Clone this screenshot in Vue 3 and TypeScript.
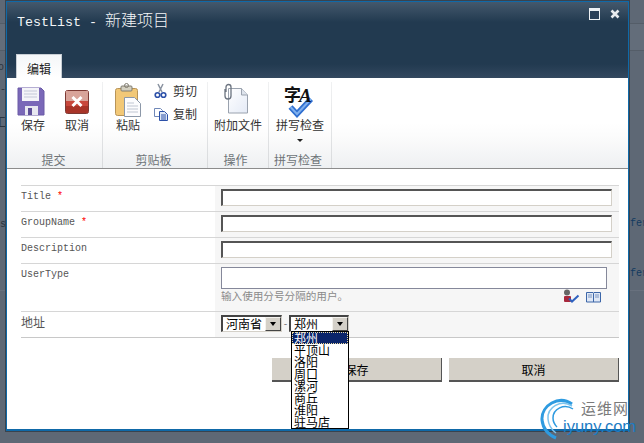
<script setup lang="ts">
const fields = [
  { label: 'Title', required: true },
  { label: 'GroupName', required: true },
  { label: 'Description', required: false },
]
const cities = ['郑州', '平顶山', '洛阳', '周口', '漯河', '商丘', '淮阳', '驻马店']
</script>

<template>
  <div class="page">
    <div class="bgband"></div>
    <span class="scrap s1">ot</span>
    <span class="scrap s2">-</span>
    <span class="scrap s3">工</span>
    <span class="scrap s4">s</span>
    <span class="scrap fer f1">fer</span>
    <span class="scrap fer f2">fer</span>
    <div class="bgline"></div>

    <div class="dialog">
      <header class="head">
        <div class="titlebar">
          <div class="title"><span class="latin">TestList - </span>新建项目</div>
          <div class="winbtns">
            <svg width="11" height="12" viewBox="0 0 11 12"><rect x="0.5" y="0.5" width="10" height="11" fill="#2a4058" stroke="#eef1f4"/><rect x="1" y="1" width="9" height="2" fill="#eef1f4"/></svg>
            <svg width="10" height="10" viewBox="0 0 10 10"><path d="M1.500 1.500l7 7M8.500 1.500l-7 7" stroke="#e8ebee" stroke-width="2.600" fill="none"/></svg>
          </div>
        </div>
        <div class="tab">编辑</div>
      </header>

      <section class="ribbon">
        <div class="group g1">
          <div class="items">
            <div class="big">
              <svg class="ico" width="34" height="36" viewBox="0 0 34 36">
                <path d="M2 6h23l3 3v24H2z" fill="#7a68b8" stroke="#6a5aa6"/>
                <rect x="6" y="6" width="17" height="13" fill="#f4f4f8"/>
                <path d="M8 9h13M8 12h13M8 15h13" stroke="#c4c8d8"/>
                <rect x="9" y="24" width="13" height="9" fill="#e8e8f0"/>
                <rect x="12" y="26" width="4" height="7" fill="#5e4f98"/>
              </svg>
              <span>保存</span>
            </div>
            <div class="big">
              <svg class="ico" width="34" height="36" viewBox="0 0 34 36">
                <rect x="5.500" y="8.500" width="23" height="23" rx="2" fill="#c8483c" stroke="#7c3a34"/>
                <rect x="6" y="9" width="22" height="10" fill="#d8a49a"/>
                <rect x="6" y="24" width="22" height="7" fill="#a83428"/>
                <path d="M12.500 15l9 9M21.500 15l-9 9" stroke="#fff" stroke-width="3" fill="none"/>
              </svg>
              <span>取消</span>
            </div>
          </div>
          <div class="glabel">提交</div>
        </div>

        <div class="group g2">
          <div class="items">
            <div class="big">
              <svg class="ico" width="34" height="36" viewBox="0 0 34 36">
                <rect x="4.500" y="6.500" width="22" height="27" rx="2" fill="#f2c877" stroke="#b89458"/>
                <rect x="10" y="4" width="11" height="5" rx="1" fill="#d4d0c0" stroke="#807c70"/>
                <circle cx="15.500" cy="3.500" r="2" fill="none" stroke="#807c70"/>
                <path d="M13.500 15.500h10l6 6v13h-16z" fill="#fcfcfe" stroke="#8c98a8"/>
                <path d="M16 21h7M16 24h11M16 27h11M16 30h11" stroke="#c0c6d2"/>
              </svg>
              <span>粘贴</span>
            </div>
            <div class="smalls">
              <div class="small">
                <svg width="16" height="16" viewBox="0 0 16 16">
                  <path d="M5 1l4 8M10 1L6 9" stroke="#8a93a0" stroke-width="1.500" fill="none"/>
                  <circle cx="4.500" cy="12" r="2.300" fill="none" stroke="#2c50a8" stroke-width="1.600"/>
                  <circle cx="10.500" cy="12" r="2.300" fill="none" stroke="#2c50a8" stroke-width="1.600"/>
                </svg>
                <span>剪切</span>
              </div>
              <div class="small">
                <svg width="16" height="16" viewBox="0 0 16 16">
                  <path d="M1.500 2.500h6l2 2v6h-8z" fill="#fff" stroke="#7088b8"/>
                  <path d="M6.500 5.500h5l3 3v6h-8z" fill="#dfe8f6" stroke="#2c50a8"/>
                  <path d="M8 9h5M8 11h5M8 13h5" stroke="#2c50a8"/>
                </svg>
                <span>复制</span>
              </div>
            </div>
          </div>
          <div class="glabel">剪贴板</div>
        </div>

        <div class="group g3">
          <div class="items">
            <div class="big wide">
              <svg class="ico" width="48" height="36" viewBox="0 0 48 36">
                <defs>
                  <linearGradient id="pg" x1="0" y1="0" x2="1" y2="1">
                    <stop offset="0" stop-color="#ffffff"/>
                    <stop offset="1" stop-color="#e4eaf6"/>
                  </linearGradient>
                </defs>
                <path d="M14.500 6.500h13l6 6.500v18h-19z" fill="url(#pg)" stroke="#9aa2ae"/>
                <path d="M27.500 6.500v6.500h6" fill="#dde3ec" stroke="#9aa2ae"/>
                <path d="M12 10V5a2.500 2.500 0 0 1 5 0v9a3 3 0 0 1-6 0V7" fill="none" stroke="#6c7480" stroke-width="1.300"/>
              </svg>
              <span>附加文件</span>
            </div>
          </div>
          <div class="glabel">操作</div>
        </div>

        <div class="group g4">
          <div class="items">
            <div class="big wide">
              <svg class="ico" width="48" height="36" viewBox="0 0 48 36">
                <path d="M14.500 25l6.500 7 14-15" fill="none" stroke="#2f6fd0" stroke-width="5.500"/>
                <path d="M14.500 25l6.500 7 14-15" fill="none" stroke="#7fb0ee" stroke-width="2"/>
                <text x="8" y="19" class="zi">字</text>
                <text x="23" y="20" class="aa">A</text>
              </svg>
              <span>拼写检查</span>
              <i class="caret"></i>
            </div>
          </div>
          <div class="glabel">拼写检查</div>
        </div>
      </section>

      <main class="form">
        <div v-for="f in fields" :key="f.label" class="row">
          <div class="name">{{ f.label }}<span v-if="f.required" class="req"> *</span></div>
          <div class="value"><div class="inset"></div></div>
        </div>

        <div class="row tall">
          <div class="name">UserType</div>
          <div class="value">
            <div class="people"></div>
            <div class="hintline">
              <span class="hint">输入使用分号分隔的用户。</span>
              <div class="pick">
                <svg width="17" height="14" viewBox="0 0 17 14">
                  <circle cx="4" cy="3.500" r="3" fill="#666"/>
                  <rect x="1" y="7" width="7" height="6" rx="1" fill="#a8283c"/>
                  <path d="M6 9.500l3 3 6.500-6" fill="none" stroke="#2f62c0" stroke-width="2"/>
                </svg>
                <svg width="15" height="13" viewBox="0 0 15 13">
                  <path d="M.5 2.500h6.500l.5 1 .5-1h6.500v9.500h-14z" fill="#dfe8f6" stroke="#3c66a8"/>
                  <path d="M7.500 3.500v8.500" stroke="#3c66a8"/>
                  <path d="M2 5h4M2 7h4M9 5h4M9 7h4" stroke="#7a94c0"/>
                </svg>
              </div>
            </div>
          </div>
        </div>

        <div class="row addr">
          <div class="name cn">地址</div>
          <div class="value selects">
            <div class="select s-prov"><span>河南省</span><b class="arrow"><i></i></b></div>
            <span class="dash">-</span>
            <div class="select s-city"><span>郑州</span><b class="arrow"><i></i></b></div>
          </div>
        </div>

        <div class="actions">
          <button class="btn" type="button">保存</button>
          <button class="btn" type="button">取消</button>
        </div>
      </main>

      <ul class="list">
        <li v-for="(c, i) in cities" :key="c" :class="{ on: i === 0 }">{{ c }}</li>
      </ul>
    </div>

    <div class="mark">
      <svg width="40" height="44" viewBox="0 0 40 44">
        <path d="M33 8C20-1 2 9 3 24c1 9 7 15 14 18" fill="none" stroke="#2e9be0" stroke-width="3"/>
        <path d="M33 10C22 3 8 11 9 23c.5 6 4 11 8 14" fill="none" stroke="#7cc4ee" stroke-width="1.500"/>
        <path d="M34 13C25 7 14 13 14 22c0 4 2 7 4 9" fill="none" stroke="#2e9be0" stroke-width="1.500"/>
      </svg>
      <span class="m-cn">运维网</span>
      <span class="m-en">iyuny.com</span>
    </div>
  </div>
</template>

<style scoped>
.page {
  position: relative;
  width: 644px;
  height: 443px;
  overflow: hidden;
  background: #5e6875;
  box-sizing: border-box;
  padding: 1px 15px 12px 6px;
  font-family: "Noto Sans CJK SC", "Liberation Sans", sans-serif;
  font-size: 12px;
  color: #222;
}
.bgband { position: absolute; left: 0; right: 0; top: 23px; height: 26px; border-top: 1px solid #545d68; border-bottom: 1px solid #545d68; background: #636d7a; }
.bgline { position: absolute; left: 0; right: 0; top: 290px; height: 1px; background: #68717e; }
.scrap { position: absolute; font-family: "Liberation Mono", monospace; font-size: 10px; line-height: 12px; color: #2b3540; }
.s1 { left: -2px; top: 62px; }
.s2 { left: 0; top: 84px; }
.s3 { left: -6px; top: 116px; font-family: "Noto Sans CJK SC", sans-serif; font-size: 12px; }
.s4 { left: 0; top: 219px; }
.fer { left: 630px; color: #123a60; }
.f1 { top: 218px; }
.f2 { top: 268px; }

.dialog {
  position: relative;
  box-sizing: border-box;
  width: 623px;
  height: 430px;
  border: 1px solid #0f69a8;
  border-bottom-width: 2px;
  background: #fff;
  box-shadow: 0 0 0 1px #39434e;
}
.head {
  height: 76px;
  box-sizing: border-box;
  background: linear-gradient(#44586c 0, #223a50 20px, #223a50 62px, #33485f 76px);
  display: flex;
  flex-direction: column;
  justify-content: space-between;
}
.titlebar { display: flex; justify-content: space-between; padding: 6px 8px 0 10px; }
.title { margin-top: 1px; font-size: 16px; line-height: 20px; color: #f4f6f8; font-weight: 300; }
.latin { font-family: "Liberation Mono", monospace; font-size: 13.33px; }
.winbtns { display: flex; gap: 10px; align-items: center; height: 12px; }
.tab {
  width: 46px;
  height: 24px;
  margin-left: 9px;
  box-sizing: border-box;
  background: linear-gradient(#f4f6f8, #fff);
  border: 1px solid #c8ced4;
  border-bottom: 0;
  text-align: center;
  line-height: 27px;
  font-size: 12px;
}
.ribbon {
  display: flex;
  height: 91px;
  box-sizing: border-box;
  background: linear-gradient(#fff 45px, #fbfbfb 60px, #eef0f2 90px);
  border-bottom: 1px solid #8c8c8c;
}
.group {
  position: relative;
  display: flex;
  flex-direction: column;
  justify-content: space-between;
  box-sizing: border-box;
  padding-top: 4px;
}
.group::after {
  content: "";
  position: absolute;
  right: 0;
  top: 4px;
  bottom: 0;
  width: 1px;
  background: linear-gradient(#f0f1f2, #d8dadc);
}
.g1 { width: 96px; padding-left: 9px; }
.g2 { width: 105px; padding-left: 8px; }
.g3 { width: 61px; padding-left: 6px; }
.g4 { width: 63px; padding-left: 7px; }
.items { display: flex; gap: 10px; }
.g2 .items { gap: 8px; }
.big { width: 34px; display: flex; flex-direction: column; align-items: center; line-height: 14px; color: #333; }
.big.wide { width: 48px; }
.ico { display: block; }
.caret { display: block; width: 0; height: 0; margin-top: 7px; border: 3px solid transparent; border-top: 3px solid #222; border-bottom: 0; }
.smalls { display: flex; flex-direction: column; gap: 6px; }
.small { display: flex; align-items: center; gap: 4px; height: 17px; color: #333; }
.small svg { width: 16px; height: 16px; }
.glabel { height: 16px; line-height: 16px; text-align: center; color: #6e7478; padding-right: 8px; margin-left: -4px; }
.zi { font-family: "Noto Sans CJK SC", sans-serif; font-weight: 700; font-size: 17px; fill: #111; }
.aa { font-family: "Liberation Serif", serif; font-weight: 700; font-style: italic; font-size: 19px; fill: #111; }

.form { padding: 16px 9px 0 14px; }
.row {
  display: flex;
  height: 26px;
  box-sizing: border-box;
  border-top: 1px solid #d6d6d6;
}
.row.tall { height: 48px; }
.row.addr { height: 27px; border-bottom: 1px solid #c8c8c8; }
.name {
  width: 194px;
  padding-top: 5px;
  font-family: "Liberation Mono", monospace;
  font-size: 10px;
  line-height: 12px;
  color: #555;
}
.name.cn { font-family: "Noto Sans CJK SC", sans-serif; font-size: 12px; line-height: 16px; padding-top: 2px; }
.req { color: #f00; }
.value {
  flex: 1;
  background: #f6f6f6;
  padding: 3px 7px 0 6px;
}
.inset {
  height: 17px;
  box-sizing: border-box;
  background: #fff;
  border: 1px solid #d4d0c8;
  border-top: 2px solid #555;
  border-left: 2px solid #555;
}
.people { width: 386px; height: 22px; box-sizing: border-box; background: #fff; border: 1px solid #85889a; }
.hintline { display: flex; justify-content: space-between; padding-right: 11px; }
.hint { font-size: 10.6px; line-height: 14px; color: #8a8a8a; }
.pick { display: flex; gap: 6px; align-items: flex-end; }
.selects { display: flex; align-items: flex-start; }
.select {
  position: relative;
  display: flex;
  justify-content: space-between;
  box-sizing: border-box;
  height: 17px;
  background: #fff;
  border: 1px solid #d4d0c8;
  border-top: 2px solid #444;
  border-left: 2px solid #444;
  line-height: 14px;
  font-size: 12px;
  color: #000;
  padding-left: 3px;
}
.s-prov { width: 61px; }
.s-city { width: 60px; }
.arrow { display: flex; align-items: center; justify-content: center; width: 16px; height: 14px; background: #d4d0c8; border-top: 1px solid #f4f2ee; border-left: 1px solid #f4f2ee; border-right: 1px solid #444; border-bottom: 1px solid #444; box-sizing: border-box; }
.arrow i { width: 0; height: 0; border: 3px solid transparent; border-top: 4px solid #000; border-bottom: 0; }
.dash { width: 7px; text-align: center; line-height: 16px; color: #666; font-size: 10px; }

.actions { display: flex; justify-content: flex-end; gap: 7px; padding-top: 20px; }
.btn {
  width: 170px;
  height: 24px;
  padding: 0;
  background: #d4d0c8;
  border: 0;
  border-right: 1px solid #555;
  border-bottom: 2px solid #555;
  font-family: "Noto Sans CJK SC", sans-serif;
  font-size: 12px;
  color: #000;
}

.list {
  position: absolute;
  left: 284px;
  top: 329px;
  width: 58px;
  height: 98px;
  margin: 0;
  padding: 0;
  list-style: none;
  box-sizing: border-box;
  background: #fff;
  border: 1px solid #000;
  overflow: hidden;
  font-size: 12px;
  line-height: 12px;
  color: #000;
}
.list li { height: 12px; padding-left: 2px; }
.list li.on { background: #0a246a; color: #fff; outline: 1px dotted #e8d8a0; outline-offset: -1px; }

.mark { position: absolute; left: 0; top: 0; width: 644px; height: 443px; pointer-events: none; }
.mark svg { position: absolute; left: 539px; top: 396px; }
.m-cn { position: absolute; left: 581px; top: 399px; font-size: 15px; line-height: 18px; color: #7a7a7a; letter-spacing: 1px; }
.m-en { position: absolute; left: 563px; top: 418px; font-family: "Liberation Sans", sans-serif; font-size: 16.5px; line-height: 17px; color: #1c7cc4; }
</style>
